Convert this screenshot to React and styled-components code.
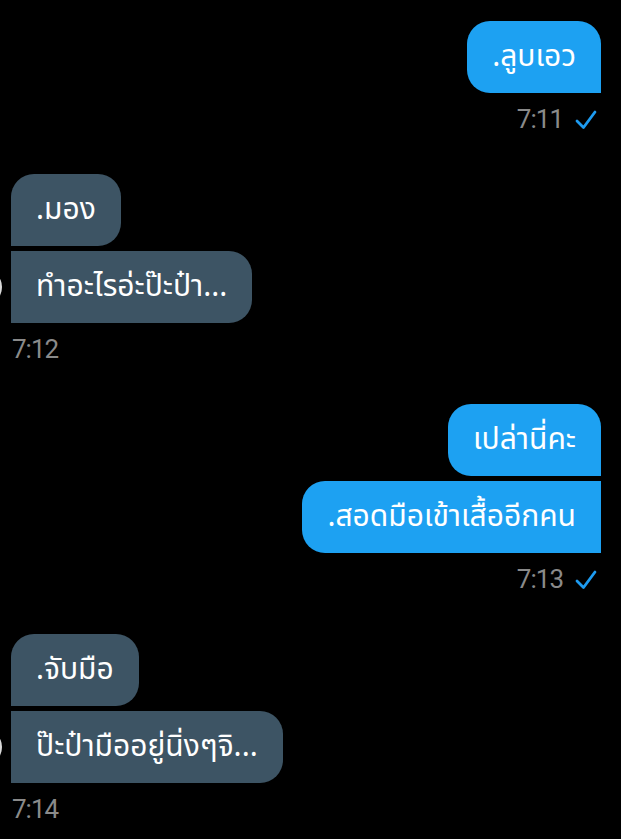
import React from 'react'
import styled, { createGlobalStyle } from 'styled-components'

const GlobalStyle = createGlobalStyle`
  html, body {
    margin: 0;
    padding: 0;
    background: #000;
  }
  body {
    font-family: "Noto Sans Thai", "Noto Sans", Roboto, sans-serif;
    overflow: hidden;
  }
`

const messages = [
  { side: 'out', texts: ['.ลูบเอว'], time: '7:11' },
  { side: 'in', texts: ['.มอง', 'ทำอะไรอ่ะป๊ะป๋า...'], time: '7:12' },
  { side: 'out', texts: ['เปล่านี่คะ', '.สอดมือเข้าเสื้ออีกคน'], time: '7:13' },
  { side: 'in', texts: ['.จับมือ', 'ป๊ะป๋ามืออยู่นิ่งๆจิ...'], time: '7:14' },
]

//corner radius per position in group
const radius = (side, first) => {
  const r = '23px'
  const s = '0'
  if (side === 'out') {
    return `${r} ${first ? r : s} ${s} ${r}`
  }
  return `${first ? r : s} ${r} ${r} ${s}`
}

const Check = () => (
  <svg width="24" height="24" viewBox="0 0 24 24">
    <path d="M3 14 L9.5 20.5 L21 5" fill="none" stroke="#1d9bf0" strokeWidth="2.8" strokeLinecap="round" strokeLinejoin="round" />
  </svg>
)

const Group = ({ side, texts, time }) => (
  <GroupWrap $side={side}>
    {texts.map((t, i) => (
      <Row key={i}>
        {side === 'in' && <Avatar $hide={i !== texts.length - 1} />}
        <Bubble $side={side} $radius={radius(side, i === 0)}>
          {t}
        </Bubble>
      </Row>
    ))}
    <Meta $side={side}>
      <Time>{time}</Time>
      {side === 'out' && <Check />}
    </Meta>
  </GroupWrap>
)

const App = () => {
  return (
    <>
      <GlobalStyle />
      <Screen>
        {messages.map((m, i) => (
          <Group key={i} {...m} />
        ))}
      </Screen>
    </>
  )
}

const Screen = styled.div`
  width: 621px;
  height: 839px;
  padding: 21px 20px 0 0;
  box-sizing: border-box;
  display: flex;
  flex-direction: column;
  gap: 40px;
  background: #000;
  overflow: hidden;
`

const GroupWrap = styled.div`
  display: flex;
  flex-direction: column;
  gap: 5px;
  align-items: ${p => (p.$side === 'out' ? 'flex-end' : 'flex-start')};
`

const Row = styled.div`
  display: flex;
  align-items: center;
`

const Avatar = styled.div`
  flex: none;
  width: 36px;
  height: 36px;
  margin-left: -34px;
  margin-right: 9px;
  border-radius: 50%;
  background: #d8d8d8;
  visibility: ${p => (p.$hide ? 'hidden' : 'visible')};
`

const Bubble = styled.div`
  height: 72px;
  display: flex;
  align-items: center;
  padding: 0 25px;
  box-sizing: border-box;
  font-size: 30px;
  color: #fff;
  white-space: nowrap;
  border-radius: ${p => p.$radius};
  background: ${p => (p.$side === 'out' ? '#1da1f2' : '#3d5464')};
`

const Meta = styled.div`
  height: 30px;
  margin-top: 6px;
  display: flex;
  align-items: center;
  gap: 11px;
  padding: ${p => (p.$side === 'out' ? '0 3px 0 0' : '0 0 0 12px')};
`

const Time = styled.span`
  font-family: Roboto, "Liberation Sans", sans-serif;
  font-size: 26px;
  letter-spacing: -1px;
  color: #8a8a8a;
`

export default App
